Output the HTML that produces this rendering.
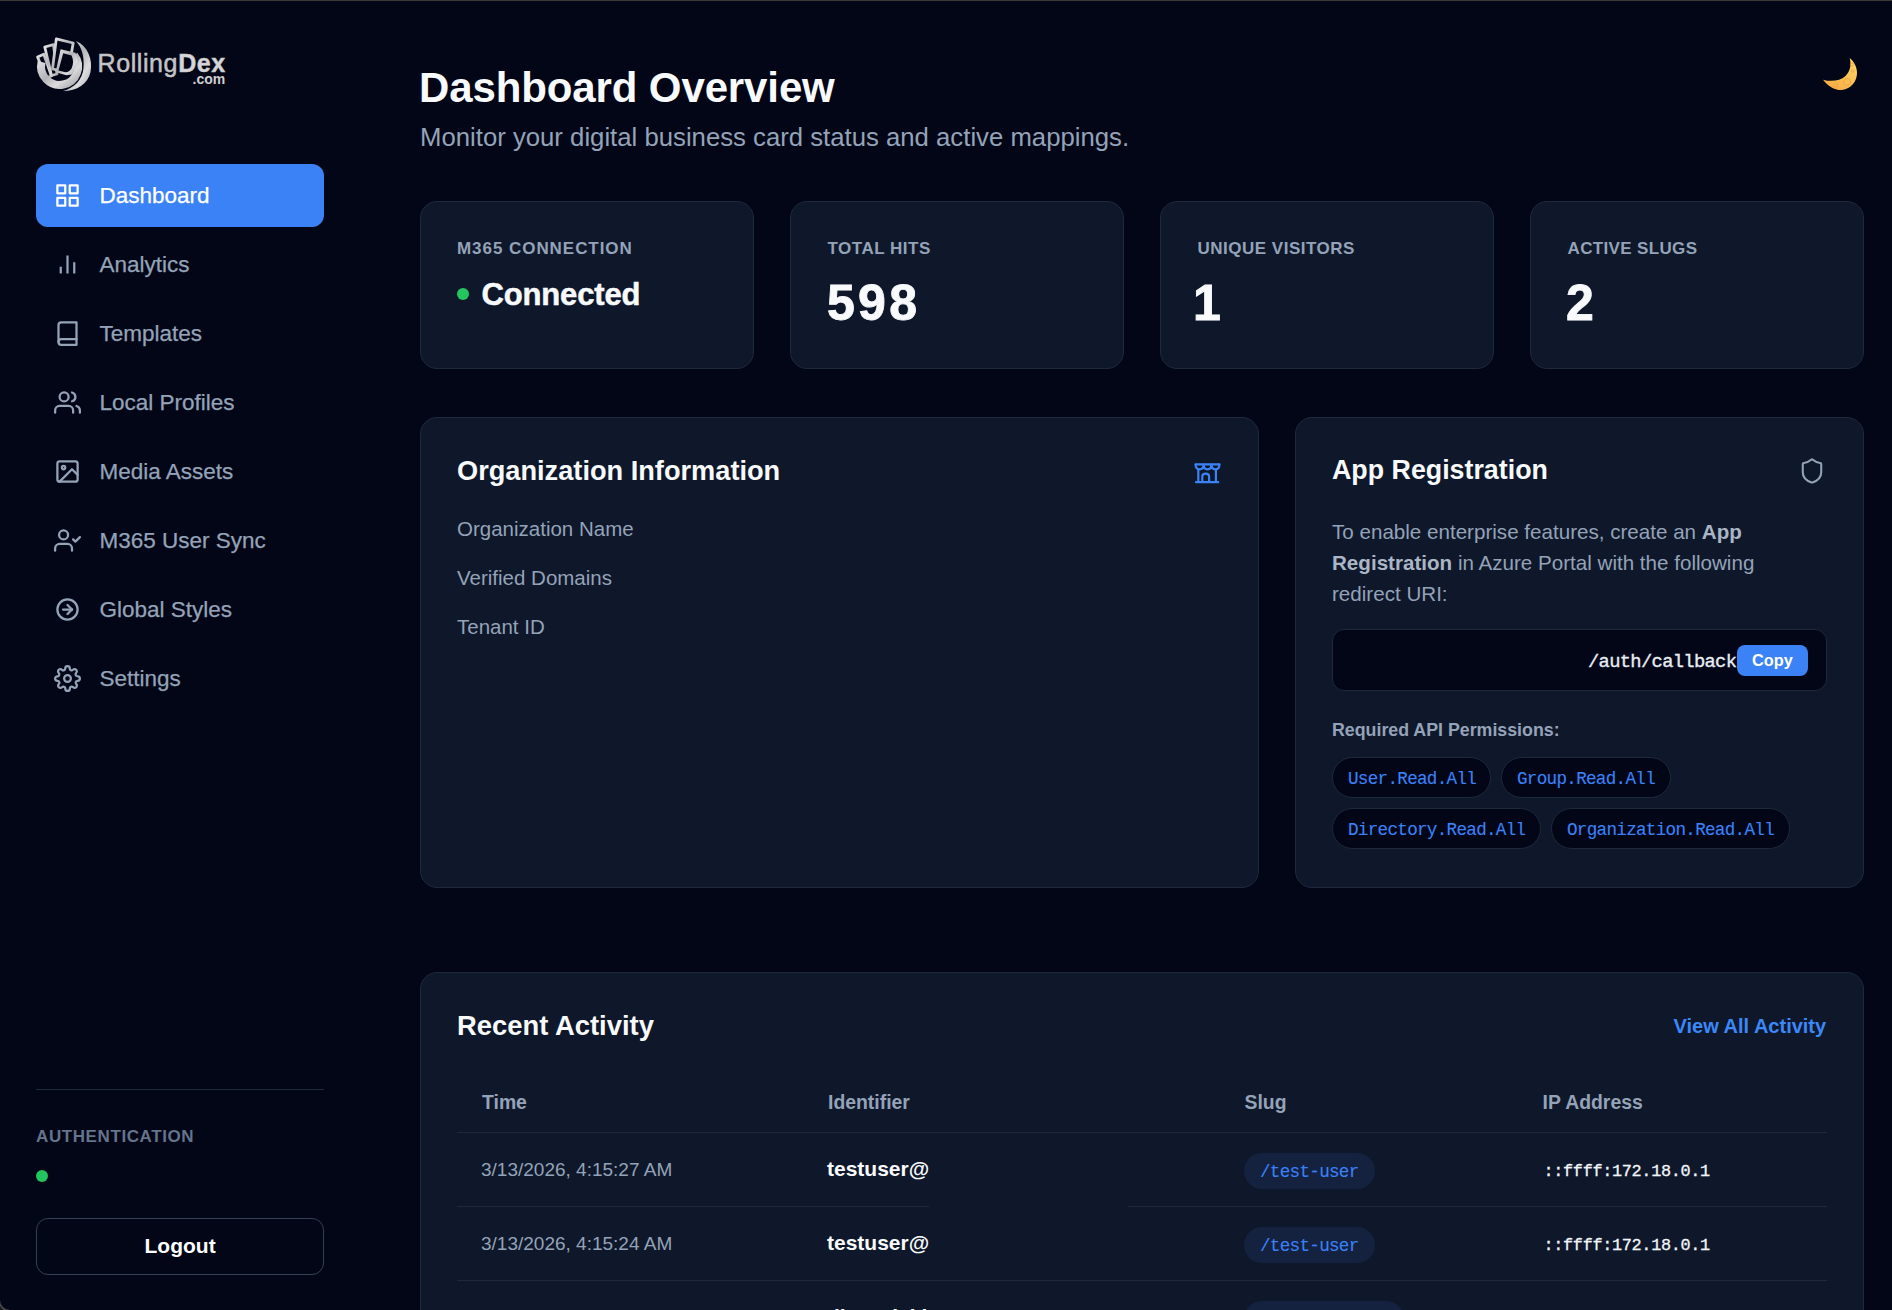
<!DOCTYPE html>
<html><head><meta charset="utf-8">
<style>
*{margin:0;padding:0;box-sizing:border-box}
html,body{width:1892px;height:1310px;overflow:hidden;background:#1a1a1a}
body{font-family:"Liberation Sans",sans-serif;position:relative}
#win{position:absolute;left:0;top:0;width:1892px;height:1310px;background:#020617;border-radius:0 0 0 10px;overflow:hidden;box-shadow:0 0 0 1.5px #4a4a4a}
.t{position:absolute;line-height:1;white-space:nowrap}
.b{font-weight:bold}
.mono{font-family:"Liberation Mono",monospace}
.card{position:absolute;background:#0f172a;border:1px solid #1e293b;border-radius:17px}
.nav{position:absolute;left:36px;width:288px;height:63px;border-radius:12px}
.nav svg{position:absolute;left:17.75px;top:17.75px;width:27px;height:27px;fill:none;stroke:#94a3b8;stroke-width:2;stroke-linecap:round;stroke-linejoin:round}
.navt{position:absolute;left:99.5px;font-size:22.5px;color:#94a3b8;line-height:1;white-space:nowrap;-webkit-text-stroke:0.25px currentColor}
.lbl{font-size:17px;font-weight:bold;color:#94a3b8;letter-spacing:0.55px}
.val{font-size:50px;letter-spacing:3.3px;-webkit-text-stroke:0.9px #f8fafc;font-weight:bold;color:#f8fafc}
.pill{position:absolute;height:41px;border-radius:21px;background:#020617;border:1px solid #1e293b}
.pill span{position:absolute;left:15px;top:12.6px;font-family:"Liberation Mono",monospace;font-size:17.6px;letter-spacing:-0.7px;-webkit-text-stroke:0.12px #3b82f6;line-height:1;color:#3b82f6;white-space:nowrap}
.sep{position:absolute;left:457px;width:1370px;height:1px;background:#1e293b}
.th{font-size:19.4px;font-weight:bold;color:#94a3b8}
.tm{font-size:19px;color:#94a3b8}
.id{font-size:21px;font-weight:bold;color:#f8fafc}
.slug{position:absolute;left:1244px;width:130.5px;height:36px;border-radius:18px;background:#14213f}
.slug span{position:absolute;left:16px;top:10.8px;font-family:"Liberation Mono",monospace;font-size:17.6px;letter-spacing:-0.7px;-webkit-text-stroke:0.12px #3b82f6;line-height:1;color:#3b82f6;white-space:nowrap}
.ip{font-family:"Liberation Mono",monospace;font-size:16.9px;letter-spacing:-0.35px;color:#f1f5f9;-webkit-text-stroke:0.3px #f1f5f9}
</style></head><body>
<div id="win">
<div style="position:absolute;left:0;top:0;width:1892px;height:1px;background:#3b3a37"></div>

<!-- ============ SIDEBAR ============ -->
<!-- logo -->
<svg style="position:absolute;left:32px;top:32px" width="64" height="64" viewBox="0 0 64 64">
  <defs>
    <linearGradient id="sg" x1="0" y1="0" x2="1" y2="1"><stop offset="0" stop-color="#e8e8ea"/><stop offset="0.45" stop-color="#b4b4b8"/><stop offset="0.7" stop-color="#dcdcde"/><stop offset="1" stop-color="#a8a8ac"/></linearGradient>
  </defs>
  <path d="M44 9 C56 14 61 28 58.5 40 C56 52 45 59 31 59 C42 56 50.5 48 51.5 36 C52.5 24 49.5 15 44 9 Z" fill="url(#sg)"/>
  <g fill="#020617" stroke="url(#sg)" stroke-width="2.8" stroke-linejoin="round">
    <path d="M5.6 25 L11.8 22.2 L19.5 44 L14 46 Z"/>
    <path d="M12.8 15 L21.5 12.6 L25 42 L19.5 43.5 Z"/>
    <path d="M24.3 6.8 L41.2 11 L36 40 L20.5 37 Z"/>
  </g>
  <path d="M9.6 30 A18.5 18.5 0 1 0 42.2 23.1" fill="none" stroke="url(#sg)" stroke-width="8"/>
  <path d="M28.6 17.2 L43.5 20.8 L46 30 L40 42.5 L34.5 43.2 L23.6 40.2 Z" fill="url(#sg)"/>
  <path d="M31.2 21.3 L39.6 23.5 Q42.6 30.5 39.5 36.5 Q37.3 40 33.5 40.2 L26.5 38.5 Z" fill="#020617"/>
</svg>
<div class="t" style="left:97.5px;top:50.5px;font-size:25px;color:#c4c4c6;letter-spacing:0.6px;-webkit-text-stroke:0.5px #c4c4c6">Rolling<span class="b" style="color:#d6d6d8">Dex</span></div>
<div class="t b" style="left:192.5px;top:72.3px;font-size:14px;color:#d0d0d2">.com</div>

<!-- nav -->
<div class="nav" style="top:164px;background:#3b82f6"><svg style="stroke:#fff" viewBox="0 0 24 24"><rect x="3" y="3" width="7" height="7"/><rect x="14" y="3" width="7" height="7"/><rect x="14" y="14" width="7" height="7"/><rect x="3" y="14" width="7" height="7"/></svg></div>
<div class="navt" style="top:185.2px;color:#fff">Dashboard</div>

<div class="nav" style="top:233px"><svg viewBox="0 0 24 24"><g stroke-linecap="butt"><line x1="18" y1="20" x2="18" y2="10"/><line x1="12" y1="20" x2="12" y2="4"/><line x1="6" y1="20" x2="6" y2="14"/></g></svg></div>
<div class="navt" style="top:254.2px">Analytics</div>

<div class="nav" style="top:302px"><svg viewBox="0 0 24 24"><path d="M4 19.5A2.5 2.5 0 0 1 6.5 17H20"/><path d="M6.5 2H20v20H6.5A2.5 2.5 0 0 1 4 19.5v-15A2.5 2.5 0 0 1 6.5 2z"/></svg></div>
<div class="navt" style="top:323.2px">Templates</div>

<div class="nav" style="top:371px"><svg viewBox="0 0 24 24"><path d="M17 21v-2a4 4 0 0 0-4-4H5a4 4 0 0 0-4 4v2"/><circle cx="9" cy="7" r="4"/><path d="M23 21v-2a4 4 0 0 0-3-3.87"/><path d="M16 3.13a4 4 0 0 1 0 7.75"/></svg></div>
<div class="navt" style="top:392.2px">Local Profiles</div>

<div class="nav" style="top:440px"><svg viewBox="0 0 24 24"><rect x="3" y="3" width="18" height="18" rx="2" ry="2"/><circle cx="8.5" cy="8.5" r="1.5"/><polyline points="21 15 16 10 5 21"/></svg></div>
<div class="navt" style="top:461.2px">Media Assets</div>

<div class="nav" style="top:509px"><svg viewBox="0 0 24 24"><path d="M16 21v-2a4 4 0 0 0-4-4H5a4 4 0 0 0-4 4v2"/><circle cx="8.5" cy="7" r="4"/><polyline points="17 11 19 13 23 9"/></svg></div>
<div class="navt" style="top:530.2px">M365 User Sync</div>

<div class="nav" style="top:578px"><svg viewBox="0 0 24 24"><circle cx="12" cy="12" r="9"/><path d="M16 12l-4 -4"/><path d="M16 12h-8"/><path d="M12 16l4 -4"/></svg></div>
<div class="navt" style="top:599.2px">Global Styles</div>

<div class="nav" style="top:647px"><svg viewBox="0 0 24 24"><circle cx="12" cy="12" r="3"/><path d="M19.4 15a1.65 1.65 0 0 0 .33 1.82l.06.06a2 2 0 0 1 0 2.830 2 2 0 0 1-2.83 0l-.06-.06a1.65 1.65 0 0 0-1.82-.33 1.65 1.65 0 0 0-1 1.51V21a2 2 0 0 1-2 2 2 2 0 0 1-2-2v-.09A1.65 1.65 0 0 0 9 19.4a1.65 1.65 0 0 0-1.82.33l-.06.06a2 2 0 0 1-2.83 0 2 2 0 0 1 0-2.83l.06-.06a1.65 1.65 0 0 0 .33-1.82 1.65 1.65 0 0 0-1.51-1H3a2 2 0 0 1-2-2 2 2 0 0 1 2-2h.09A1.65 1.65 0 0 0 4.6 9a1.65 1.65 0 0 0-.33-1.82l-.06-.06a2 2 0 0 1 0-2.83 2 2 0 0 1 2.830 0l.06.06a1.65 1.65 0 0 0 1.82.33H9a1.65 1.65 0 0 0 1-1.51V3a2 2 0 0 1 2-2 2 2 0 0 1 2 2v.09a1.65 1.65 0 0 0 1 1.51 1.65 1.65 0 0 0 1.82-.33l.06-.06a2 2 0 0 1 2.83 0 2 2 0 0 1 0 2.83l-.06.06a1.65 1.65 0 0 0-.33 1.82V9a1.65 1.65 0 0 0 1.51 1H21a2 2 0 0 1 2 2 2 2 0 0 1-2 2h-.09a1.65 1.65 0 0 0-1.51 1z"/></svg></div>
<div class="navt" style="top:668.2px">Settings</div>

<!-- sidebar bottom -->
<div style="position:absolute;left:36px;top:1089px;width:288px;height:1px;background:#1e293b"></div>
<div class="t b" style="left:36px;top:1127.5px;font-size:17px;color:#64748b;letter-spacing:0.6px">AUTHENTICATION</div>
<div style="position:absolute;left:36px;top:1170px;width:12px;height:12px;border-radius:50%;background:#22c55e"></div>
<div style="position:absolute;left:36px;top:1218px;width:288px;height:57px;border:1px solid #334155;border-radius:12px"></div>
<div class="t b" style="left:144.5px;top:1235px;font-size:21px;color:#fff">Logout</div>

<!-- ============ MAIN ============ -->
<div class="t b" style="left:419px;top:66.5px;font-size:42px;color:#f8fafc;letter-spacing:-0.12px">Dashboard Overview</div>
<div class="t" style="left:420px;top:125.3px;font-size:25.72px;color:#94a3b8">Monitor your digital business card status and active mappings.</div>

<!-- moon -->
<svg style="position:absolute;left:1820px;top:54px" width="40" height="40" viewBox="0 0 40 40">
  <defs><linearGradient id="mg" x1="0.8" y1="0" x2="0.2" y2="1"><stop offset="0" stop-color="#ffd766"/><stop offset="1" stop-color="#f9ab45"/></linearGradient></defs>
  <path d="M3 25.7 C8 32 15 36.5 22 36 C31 35 37.5 27 37 18 C36.7 12 33.5 7 29.6 4 C31.5 10 30.5 17 25.5 22 C20 27 11 28 3 25.7 Z" fill="url(#mg)"/>
  <g fill="none" stroke="#eaa23c" stroke-width="0.9" opacity="0.8">
    <circle cx="27" cy="28" r="3.6"/>
    <circle cx="15.5" cy="31.5" r="2"/>
    <circle cx="32.5" cy="17" r="1.3"/>
    <circle cx="32" cy="10.5" r="1.6"/>
  </g>
</svg>

<!-- stat cards -->
<div class="card" style="left:420px;top:201px;width:334px;height:168px"></div>
<div class="card" style="left:790px;top:201px;width:334px;height:168px"></div>
<div class="card" style="left:1160px;top:201px;width:334px;height:168px"></div>
<div class="card" style="left:1530px;top:201px;width:334px;height:168px"></div>

<div class="t lbl" style="left:457px;top:239.7px;letter-spacing:0.95px">M365 CONNECTION</div>
<div class="t lbl" style="left:827.5px;top:239.7px;letter-spacing:0.5px">TOTAL HITS</div>
<div class="t lbl" style="left:1197.5px;top:239.7px;letter-spacing:0.5px">UNIQUE VISITORS</div>
<div class="t lbl" style="left:1567.5px;top:239.7px;letter-spacing:0.35px">ACTIVE SLUGS</div>

<div style="position:absolute;left:457px;top:288px;width:12px;height:12px;border-radius:50%;background:#22c55e"></div>
<div class="t b" style="left:481.5px;top:279px;font-size:31px;color:#f8fafc;letter-spacing:-0.15px;-webkit-text-stroke:0.5px #f8fafc">Connected</div>
<div class="t val" style="left:827px;top:278.2px">598</div>
<div class="t val" style="left:1193px;top:278.2px">1</div>
<div class="t val" style="left:1566px;top:278.2px">2</div>

<!-- org card -->
<div class="card" style="left:420px;top:417px;width:839px;height:471px"></div>
<div class="t b" style="left:457px;top:457.2px;font-size:27.2px;color:#f8fafc">Organization Information</div>
<svg style="position:absolute;left:1193px;top:461px" width="28" height="25" viewBox="0 0 28 25" fill="none" stroke="#3b82f6" stroke-width="2.2" stroke-linejoin="round" stroke-linecap="round">
  <path d="M2.6 3.3 H26.4"/>
  <path d="M2.6 3.5 Q2.6 8.3 6.6 8.3 Q10.6 8.3 10.6 3.5 M10.6 3.5 Q10.6 8.3 14.5 8.3 Q18.5 8.3 18.5 3.5 M18.5 3.5 Q18.5 8.3 22.4 8.3 Q26.4 8.3 26.4 3.5"/>
  <path d="M5.3 8.5 V21 M22.9 8.5 V21"/>
  <path d="M3 21.2 H25.2"/>
  <path d="M9.3 21 V15.6 Q9.3 12.6 12.7 12.6 Q16.1 12.6 16.1 15.6 V21"/>
</svg>
<div class="t" style="left:457px;top:518.9px;font-size:20.5px;color:#94a3b8">Organization Name</div>
<div class="t" style="left:457px;top:567.8px;font-size:20.5px;color:#94a3b8">Verified Domains</div>
<div class="t" style="left:457px;top:617px;font-size:20.5px;color:#94a3b8">Tenant ID</div>

<!-- app reg card -->
<div class="card" style="left:1295px;top:417px;width:569px;height:471px"></div>
<div class="t b" style="left:1332px;top:457.2px;font-size:26.8px;color:#f8fafc">App Registration</div>
<svg style="position:absolute;left:1798px;top:456px" width="28" height="30" viewBox="0 0 24 26" fill="none" stroke="#94a3b8" stroke-width="1.8" stroke-linejoin="round">
  <path d="M20 14c0 5-3.5 7.5-7.66 8.95a1 1 0 0 1-.67-.01C7.5 21.5 4 19 4 14V7a1 1 0 0 1 1-1c2 0 4.5-1.2 6.24-2.72a1.17 1.17 0 0 1 1.52 0C14.51 4.81 17 6 19 6a1 1 0 0 1 1 1z"/>
</svg>
<div class="t" style="left:1332px;top:522px;font-size:20.6px;color:#94a3b8">To enable enterprise features, create an <b style="color:#aab6c6">App</b></div>
<div class="t" style="left:1332px;top:553.1px;font-size:20.6px;color:#94a3b8"><b style="color:#aab6c6">Registration</b> in Azure Portal with the following</div>
<div class="t" style="left:1332px;top:583.7px;font-size:20.6px;color:#94a3b8">redirect URI:</div>

<div style="position:absolute;left:1332px;top:629px;width:495px;height:62px;background:#020617;border:1px solid #1e293b;border-radius:12px"></div>
<div class="t mono" style="left:1588px;top:652.6px;font-size:18.8px;letter-spacing:-0.68px;color:#e8edf3;-webkit-text-stroke:0.35px #e8edf3">/auth/callback</div>
<div style="position:absolute;left:1737px;top:645px;width:71px;height:31px;border-radius:8px;background:#3b82f6"></div>
<div class="t b" style="left:1752px;top:651.5px;font-size:16.3px;color:#fff">Copy</div>

<div class="t b" style="left:1332px;top:722px;font-size:17.8px;color:#94a3b8">Required API Permissions:</div>
<div class="pill" style="left:1332px;top:757px;width:159px"><span>User.Read.All</span></div>
<div class="pill" style="left:1501px;top:757px;width:170px"><span>Group.Read.All</span></div>
<div class="pill" style="left:1332px;top:808px;width:209px"><span>Directory.Read.All</span></div>
<div class="pill" style="left:1551px;top:808px;width:239px"><span>Organization.Read.All</span></div>

<!-- activity card -->
<div class="card" style="left:420px;top:972px;width:1444px;height:400px"></div>
<div class="t b" style="left:457px;top:1012.1px;font-size:27.4px;color:#f8fafc">Recent Activity</div>
<div class="t b" style="left:1673.5px;top:1016px;font-size:20px;color:#3b88f8">View All Activity</div>

<div class="t th" style="left:482px;top:1093px">Time</div>
<div class="t th" style="left:828px;top:1093px">Identifier</div>
<div class="t th" style="left:1244.5px;top:1093px">Slug</div>
<div class="t th" style="left:1542.5px;top:1093px">IP Address</div>
<div class="sep" style="top:1132px"></div>

<div class="t tm" style="left:481px;top:1160px">3/13/2026, 4:15:27 AM</div>
<div class="t id" style="left:827px;top:1158.2px">testuser@</div>
<div class="slug" style="top:1153px"><span>/test-user</span></div>
<div class="t ip" style="left:1543.5px;top:1163.5px">::ffff:172.18.0.1</div>
<div class="sep" style="top:1206px;width:472px"></div>
<div class="sep" style="top:1206px;left:1128px;width:699px"></div>

<div class="t tm" style="left:481px;top:1234px">3/13/2026, 4:15:24 AM</div>
<div class="t id" style="left:827px;top:1232.2px">testuser@</div>
<div class="slug" style="top:1227px"><span>/test-user</span></div>
<div class="t ip" style="left:1543.5px;top:1237.5px">::ffff:172.18.0.1</div>
<div class="sep" style="top:1280px"></div>

<div class="t id" style="left:827px;top:1306.2px">dkowalski@</div>
<div class="slug" style="top:1301px;width:160px"></div>

</div>
</body></html>
